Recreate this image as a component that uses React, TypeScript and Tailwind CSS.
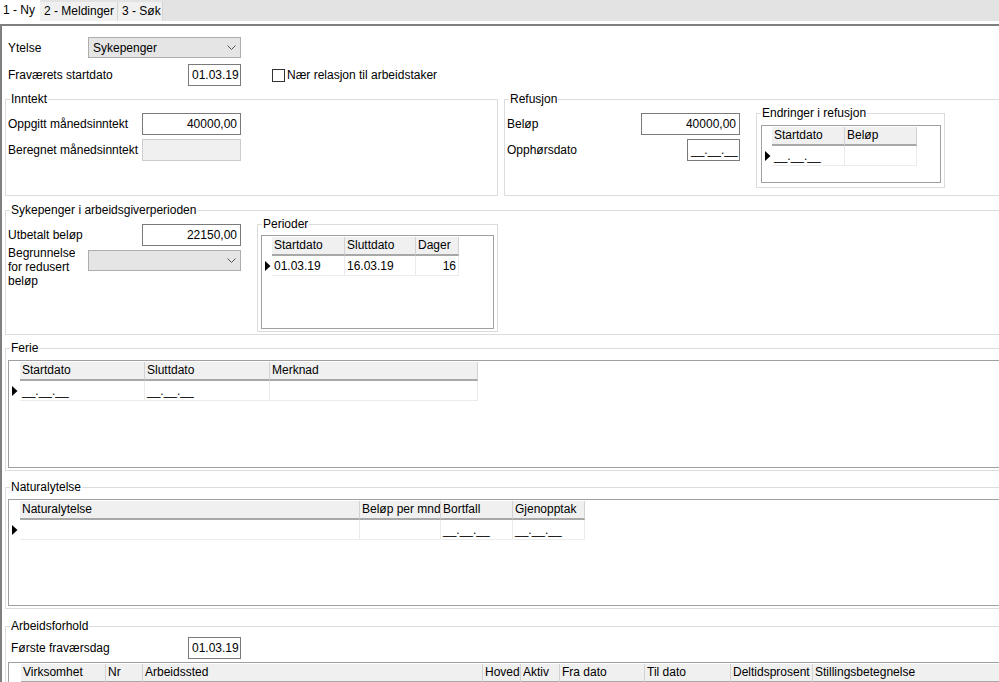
import React from "react";

type Col = { label: string; w: string; right?: boolean };

const Arrow = () => (
  <svg width="6" height="10" viewBox="0 0 6 10" className="shrink-0">
    <polygon points="0,0 5.5,5 0,10" fill="#000" />
  </svg>
);

const Chevron = () => (
  <svg width="9" height="6" viewBox="0 0 9 6" className="shrink-0">
    <polyline points="0.5,0.5 4.5,4.5 8.5,0.5" fill="none" stroke="#555" strokeWidth="1" />
  </svg>
);

function TextBox({ w, value, right, disabled }: { w: string; value?: string; right?: boolean; disabled?: boolean }) {
  return (
    <div
      className={`${w} h-[22px] shrink-0 border flex items-center px-[3px] whitespace-nowrap ${right ? "justify-end" : ""} ${
        disabled ? "bg-[#f0f0f0] border-[#cccccc]" : "bg-white border-[#7a7a7a]"
      }`}
    >
      {value}
    </div>
  );
}

function Combo({ w, value }: { w: string; value?: string }) {
  return (
    <div className={`${w} h-[21px] shrink-0 border border-[#adadad] bg-[#e5e5e5] flex items-center justify-between pl-[4px] pr-[4px]`}>
      <span>{value}</span>
      <Chevron />
    </div>
  );
}

function GroupBox({ title, className, children }: { title: string; className: string; children?: React.ReactNode }) {
  return (
    <div className={`relative border border-[#dcdcdc] shrink-0 ${className}`}>
      <span className="absolute left-[4px] -top-[8px] bg-white px-[1px] leading-[14px] whitespace-nowrap">{title}</span>
      {children}
    </div>
  );
}

function Grid({ cols, rows, rh, className }: { cols: Col[]; rows: string[][]; rh: string; className: string }) {
  return (
    <div className={`border border-[#a0a0a0] bg-white overflow-hidden ${className}`}>
      <div className="flex h-[19px] mt-[1px]">
        <div className={`${rh} shrink-0`} />
        {cols.map((c) => (
          <div
            key={c.label}
            className={`${c.w} shrink-0 bg-[#f0f0f0] border-r border-r-[#d2d2d2] border-b-2 border-b-[#a8a8a8] px-[2px] leading-[17px] whitespace-nowrap overflow-hidden`}
          >
            {c.label}
          </div>
        ))}
      </div>
      {rows.map((r, i) => (
        <div key={i} className="flex h-[20px]">
          <div className={`${rh} shrink-0 flex items-center pl-[3px]`}>
            <Arrow />
          </div>
          {cols.map((c, j) => (
            <div
              key={c.label}
              className={`${c.w} shrink-0 border-r border-b border-[#ebebeb] px-[2px] flex items-center whitespace-nowrap overflow-hidden ${
                c.right ? "justify-end" : ""
              }`}
            >
              {r[j]}
            </div>
          ))}
        </div>
      ))}
    </div>
  );
}

const mask = "__.__.__";

export default function App() {
  return (
    <div className="w-[999px] h-[682px] overflow-hidden bg-white text-[12px] text-black [font-family:'Liberation_Sans',Arial,sans-serif]">
      {/* tabs */}
      <div className="h-[21px] bg-[#e3e3e3] flex items-start">
        <div className="h-[24px] w-[40px] bg-white pl-[3px] pt-[3px] leading-[14px] relative z-10">1 - Ny</div>
        <div className="mt-[2px] h-[19px] w-[78px] bg-[#f0f0f0] border-r border-[#d6d6d6] pl-[4px] pt-[2px] leading-[14px] whitespace-nowrap">
          2 - Meldinger
        </div>
        <div className="mt-[2px] h-[19px] w-[45px] bg-[#f0f0f0] border-r border-[#d6d6d6] pl-[4px] pt-[2px] leading-[14px] whitespace-nowrap">
          3 - Søk
        </div>
      </div>
      <div className="h-[3px] bg-white" />

      {/* panel */}
      <div className="w-[1010px] h-[700px] border-t-2 border-l-2 border-[#7f7f7f] pl-[3px]">
        <div className="flex items-center pl-[3px] pt-[11px]">
          <div className="w-[80px]">Ytelse</div>
          <Combo w="w-[153px]" value="Sykepenger" />
        </div>
        <div className="flex items-center pl-[3px] mt-[6px]">
          <div className="w-[180px]">Fraværets startdato</div>
          <TextBox w="w-[53px]" value="01.03.19" />
          <div className="ml-[31px] w-[13px] h-[13px] border border-[#333] bg-white" />
          <span className="ml-[2px]">Nær relasjon til arbeidstaker</span>
        </div>

        {/* Inntekt + Refusjon */}
        <div className="flex mt-[13px]">
          <GroupBox title="Inntekt" className="w-[493px] h-[97px] pt-[13px] pl-[2px]">
            <div className="flex items-center">
              <div className="w-[134px]">Oppgitt månedsinntekt</div>
              <TextBox w="w-[99px]" value="40000,00" right />
            </div>
            <div className="flex items-center mt-[4px]">
              <div className="w-[134px]">Beregnet månedsinntekt</div>
              <TextBox w="w-[99px]" disabled />
            </div>
          </GroupBox>
          <GroupBox title="Refusjon" className="ml-[6px] w-[510px] h-[97px] pt-[13px] pl-[2px] flex items-start">
            <div className="w-[233px] shrink-0">
              <div className="flex items-center">
                <div className="w-[134px]">Beløp</div>
                <TextBox w="w-[99px]" value="40000,00" right />
              </div>
              <div className="flex items-center mt-[4px]">
                <div className="flex-1">Opphørsdato</div>
                <TextBox w="w-[53px]" value={mask} />
              </div>
            </div>
            <GroupBox title="Endringer i refusjon" className="ml-[16px] w-[189px] h-[75px] pt-[11px] pl-[4px]">
              <Grid
                rh="w-[10px]"
                className="w-[180px] h-[58px]"
                cols={[
                  { label: "Startdato", w: "w-[73px]" },
                  { label: "Beløp", w: "w-[72px]" },
                ]}
                rows={[[mask, ""]]}
              />
            </GroupBox>
          </GroupBox>
        </div>

        {/* Sykepenger i arbeidsgiverperioden */}
        <GroupBox title="Sykepenger i arbeidsgiverperioden" className="mt-[14px] w-[1000px] h-[125px] pt-[13px] pl-[2px] flex items-start">
          <div className="w-[233px] shrink-0">
            <div className="flex items-center">
              <div className="w-[134px]">Utbetalt beløp</div>
              <TextBox w="w-[99px]" value="22150,00" right />
            </div>
            <div className="flex items-start">
              <div className="w-[80px] leading-[14px]">
                Begrunnelse
                <br />
                for redusert
                <br />
                beløp
              </div>
              <div className="mt-[4px]">
                <Combo w="w-[153px]" />
              </div>
            </div>
          </div>
          <GroupBox title="Perioder" className="ml-[16px] w-[241px] h-[108px] pt-[10px] pl-[3px]">
            <Grid
              rh="w-[10px]"
              className="w-[233px] h-[94px]"
              cols={[
                { label: "Startdato", w: "w-[73px]" },
                { label: "Sluttdato", w: "w-[71px]" },
                { label: "Dager", w: "w-[43px]", right: true },
              ]}
              rows={[["01.03.19", "16.03.19", "16"]]}
            />
          </GroupBox>
        </GroupBox>

        {/* Ferie */}
        <GroupBox title="Ferie" className="mt-[13px] w-[1000px] h-[123px] pt-[11px] pl-[2px]">
          <Grid
            rh="w-[11px]"
            className="w-[996px] h-[108px]"
            cols={[
              { label: "Startdato", w: "w-[125px]" },
              { label: "Sluttdato", w: "w-[125px]" },
              { label: "Merknad", w: "w-[208px]" },
            ]}
            rows={[[mask, mask, ""]]}
          />
        </GroupBox>

        {/* Naturalytelse */}
        <GroupBox title="Naturalytelse" className="mt-[16px] w-[1000px] h-[122px] pt-[11px] pl-[2px]">
          <Grid
            rh="w-[11px]"
            className="w-[996px] h-[107px]"
            cols={[
              { label: "Naturalytelse", w: "w-[340px]" },
              { label: "Beløp per mnd", w: "w-[81px]" },
              { label: "Bortfall", w: "w-[72px]" },
              { label: "Gjenopptak", w: "w-[72px]" },
            ]}
            rows={[["", "", mask, mask]]}
          />
        </GroupBox>

        {/* Arbeidsforhold */}
        <GroupBox title="Arbeidsforhold" className="mt-[17px] w-[1000px] h-[120px] pt-[10px] pl-[2px]">
          <div className="flex items-center pl-[3px]">
            <div className="w-[177px]">Første fraværsdag</div>
            <TextBox w="w-[53px]" value="01.03.19" />
          </div>
          <Grid
            rh="w-[12px]"
            className="mt-[3px] w-[996px] h-[80px]"
            cols={[
              { label: "Virksomhet", w: "w-[85px]" },
              { label: "Nr", w: "w-[37px]" },
              { label: "Arbeidssted", w: "w-[340px]" },
              { label: "Hoved", w: "w-[38px]" },
              { label: "Aktiv", w: "w-[39px]" },
              { label: "Fra dato", w: "w-[85px]" },
              { label: "Til dato", w: "w-[86px]" },
              { label: "Deltidsprosent", w: "w-[82px]" },
              { label: "Stillingsbetegnelse", w: "w-[190px]" },
            ]}
            rows={[]}
          />
        </GroupBox>
      </div>
    </div>
  );
}
